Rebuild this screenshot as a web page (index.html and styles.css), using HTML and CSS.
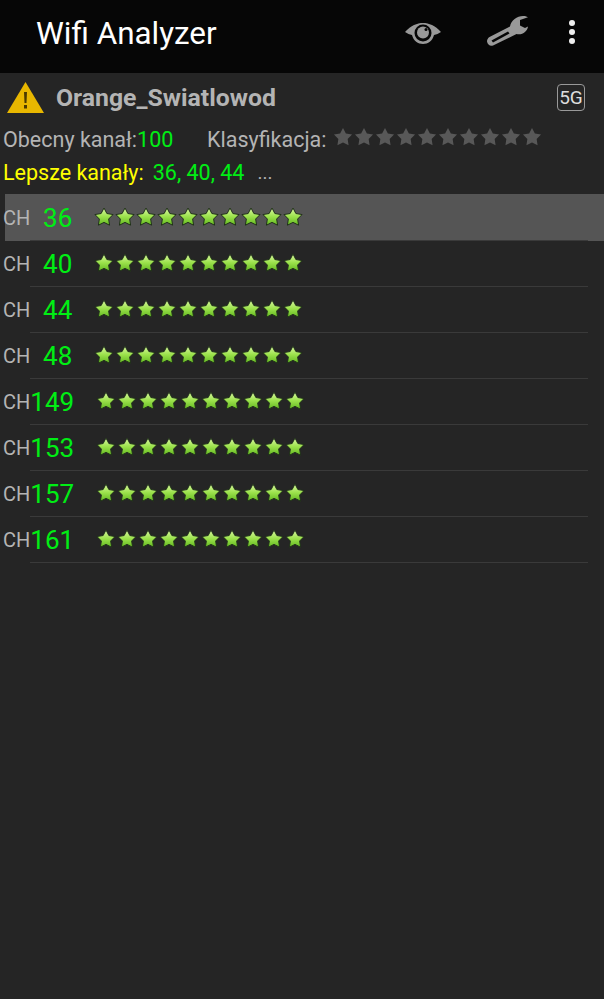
FILE: index.html
```html
<!DOCTYPE html>
<html lang="pl">
<head>
  <meta charset="UTF-8" />
  <meta name="viewport" content="width=device-width, initial-scale=1.0" />
  <title>Wifi Analyzer</title>
  <link rel="stylesheet" href="styles.css">
</head>
<body>
  <!-- shared star shapes -->
  <svg class="defs" aria-hidden="true">
    <defs>
      <linearGradient id="star-green" x1="0" y1="0" x2="0" y2="1">
        <stop offset="0" stop-color="#dcf8a4" />
        <stop offset="0.5" stop-color="#9ce24c" />
        <stop offset="1" stop-color="#62b820" />
      </linearGradient>
      <path id="star-shape" d="M10 1 L12.88 6.54 19.04 7.56 14.66 12.01 15.58 18.19 10 15.4 4.42 18.19 5.34 12.01 .96 7.56 7.12 6.54Z" />
      <symbol id="star" viewBox="0 0 20 20">
        <use href="#star-shape" fill="url(#star-green)" stroke="#20301a" stroke-width="1" stroke-linejoin="round" />
      </symbol>
      <symbol id="green-stars" viewBox="0 0 209 20">
        <use href="#star" x="0" width="20" height="20" />
        <use href="#star" x="21" width="20" height="20" />
        <use href="#star" x="42" width="20" height="20" />
        <use href="#star" x="63" width="20" height="20" />
        <use href="#star" x="84" width="20" height="20" />
        <use href="#star" x="105" width="20" height="20" />
        <use href="#star" x="126" width="20" height="20" />
        <use href="#star" x="147" width="20" height="20" />
        <use href="#star" x="168" width="20" height="20" />
        <use href="#star" x="189" width="20" height="20" />
      </symbol>
      <symbol id="grey-stars" viewBox="0 0 209 20">
        <use href="#star-shape" x="0" />
        <use href="#star-shape" x="21" />
        <use href="#star-shape" x="42" />
        <use href="#star-shape" x="63" />
        <use href="#star-shape" x="84" />
        <use href="#star-shape" x="105" />
        <use href="#star-shape" x="126" />
        <use href="#star-shape" x="147" />
        <use href="#star-shape" x="168" />
        <use href="#star-shape" x="189" />
      </symbol>
    </defs>
  </svg>

  <header class="toolbar">
    <h1 class="toolbar-title">Wifi Analyzer</h1>
    <svg class="icon-eye" viewBox="0 0 36 21">
      <path class="icon-fill" d="M0 9 C6 2.5 12 0 18 0 C24 0 30 2.5 36 9 C33.5 10.5 31.5 11.5 29 12 C27.5 18 23 21 18 21 C13 21 8.5 18 7 12 C4.5 11.5 2.5 10.500 0 9Z" />
      <circle class="icon-cut" cx="18" cy="10" r="8.5" />
      <circle class="icon-fill" cx="18" cy="9.500" r="6" />
      <circle class="icon-cut" cx="21" cy="6.500" r="1.500" />
    </svg>
    <svg class="icon-wrench" viewBox="0 0 41 30">
      <path class="icon-fill" d="M23 10.500 C24 4.500 30 0 36 0 C38 0 39.500 .5 41 1.200 L33 4 L33 9.500 L38 12 L41 10.500 C40.500 15.500 35 19.500 29.500 18 L6 29.500 C3 30.500 .5 28.500 0 25.500 C0 23.500 1 22 2.500 21Z" />
      <path class="icon-cut" d="M4.500 24.500 L21 15.500 L22.500 17.500 L6 26.500Z" />
    </svg>
    <div class="overflow-dots">
      <span class="dot"></span>
      <span class="dot"></span>
      <span class="dot"></span>
    </div>
  </header>

  <section class="summary">
    <div class="network">
      <svg class="icon-warning" viewBox="0 0 37 31">
        <path d="M18.500 0 L37 31 L0 31Z" fill="#e8b700" />
        <path d="M17 10 H20 L19.500 21 H17.500Z M17 23 H20 V26.500 H17Z" fill="#4a3a00" />
      </svg>
      <span class="ssid">Orange_Swiatlowod</span>
      <span class="band">5G</span>
    </div>
    <div class="info-line">
      <span class="current">Obecny kanał:<span class="green">100</span></span>
      <span class="rating-label">Klasyfikacja:</span>
      <svg class="grey-stars"><use href="#grey-stars" /></svg>
    </div>
    <div class="better-line">
      <span class="better-label">Lepsze kanały:</span>
      <span class="green">36, 40, 44</span>
      <span class="more">...</span>
    </div>
  </section>

  <ul class="channels">
    <li class="row row-active">
      <span class="ch">CH</span>
      <div class="row-body">
        <span class="num">36</span>
        <svg class="stars"><use href="#green-stars" /></svg>
      </div>
    </li>
    <li class="row">
      <span class="ch">CH</span>
      <div class="row-body">
        <span class="num">40</span>
        <svg class="stars"><use href="#green-stars" /></svg>
      </div>
    </li>
    <li class="row">
      <span class="ch">CH</span>
      <div class="row-body">
        <span class="num">44</span>
        <svg class="stars"><use href="#green-stars" /></svg>
      </div>
    </li>
    <li class="row">
      <span class="ch">CH</span>
      <div class="row-body">
        <span class="num">48</span>
        <svg class="stars"><use href="#green-stars" /></svg>
      </div>
    </li>
    <li class="row row-wide">
      <span class="ch">CH</span>
      <div class="row-body">
        <span class="num">149</span>
        <svg class="stars"><use href="#green-stars" /></svg>
      </div>
    </li>
    <li class="row row-wide">
      <span class="ch">CH</span>
      <div class="row-body">
        <span class="num">153</span>
        <svg class="stars"><use href="#green-stars" /></svg>
      </div>
    </li>
    <li class="row row-wide">
      <span class="ch">CH</span>
      <div class="row-body">
        <span class="num">157</span>
        <svg class="stars"><use href="#green-stars" /></svg>
      </div>
    </li>
    <li class="row row-wide">
      <span class="ch">CH</span>
      <div class="row-body">
        <span class="num">161</span>
        <svg class="stars"><use href="#green-stars" /></svg>
      </div>
    </li>
  </ul>
</body>
</html>
```

FILE: styles.css
```css
html, body {
  margin: 0;
  padding: 0;
  overflow: hidden;
}

body {
  width: 604px;
  height: 999px;
  font-family: Roboto, sans-serif;
  background: #252525;
  color: #b4b4b4;
}

.defs {
  display: block;
  width: 0;
  height: 0;
}

.green {
  color: #00ee14;
}

/* toolbar */
.toolbar {
  display: flex;
  align-items: center;
  height: 73px;
  padding-left: 36px;
  background: #060606;
  box-sizing: border-box;
}

.toolbar-title {
  flex: 1;
  margin: 0 0 7px;
  color: #fff;
  font-size: 31.4px;
  font-weight: 400;
}

.icon-fill {
  fill: #999;
}

.icon-cut {
  fill: #060606;
}

.icon-eye {
  width: 36px;
  height: 21px;
  margin: 0 46px 6px 0;
}

.icon-wrench {
  width: 41px;
  height: 30px;
  margin: 0 41px 12px 0;
}

.overflow-dots {
  display: flex;
  flex-direction: column;
  gap: 3px;
  margin: 0 29px 10px 0;
}

.dot {
  width: 6px;
  height: 6px;
  border-radius: 50%;
  background: #eee;
}

/* network summary */
.summary {
  height: 121px;
  padding-left: 3px;
  box-sizing: border-box;
}

.network {
  display: flex;
  align-items: center;
  height: 49px;
  margin-bottom: 1px;
  padding: 0 19px 0 4px;
}

.icon-warning {
  width: 37px;
  height: 31px;
  margin-right: 12px;
}

.ssid {
  flex: 1;
  font-size: 24.8px;
  font-weight: 700;
}

.band {
  width: 26px;
  height: 25px;
  border: 1px solid #999;
  border-radius: 4px;
  color: #ddd;
  font-size: 19px;
  line-height: 25px;
  text-align: center;
}

.info-line,
.better-line {
  display: flex;
  align-items: center;
  height: 33px;
  font-size: 21.5px;
}

.current {
  width: 204px;
}

.rating-label {
  margin-right: 6px;
}

.grey-stars {
  width: 209px;
  height: 20px;
  margin-bottom: 6px;
  fill: #585858;
}

.better-label {
  margin-right: 9px;
  color: #ff0;
}

.more {
  margin-left: 13px;
  font-size: 19px;
}

/* channel list */
.channels {
  margin: 0;
  padding: 0;
  list-style: none;
}

.row {
  display: flex;
  align-items: stretch;
  height: 46px;
}

.row-active {
  height: 47px;
  margin-left: 5px;
  background: #555;
}

.ch {
  flex: 0 0 30px;
  padding-left: 3px;
  box-sizing: border-box;
  font-size: 20px;
  line-height: 46px;
}

.row-active .ch {
  margin-left: -5px;
  line-height: 49px;
}

.row-body {
  display: flex;
  flex: 1;
  align-items: center;
  margin-right: 16px;
  border-bottom: 1px solid #3a3a3a;
}

.row-active .row-body {
  padding-top: 2px;
}

.num {
  width: 42px;
  color: #00ee14;
  font-size: 26px;
  text-align: right;
}

.stars {
  width: 209px;
  height: 20px;
  margin: 0 0 2px 22px;
}

.row-wide .stars {
  margin-left: 24px;
}
```
